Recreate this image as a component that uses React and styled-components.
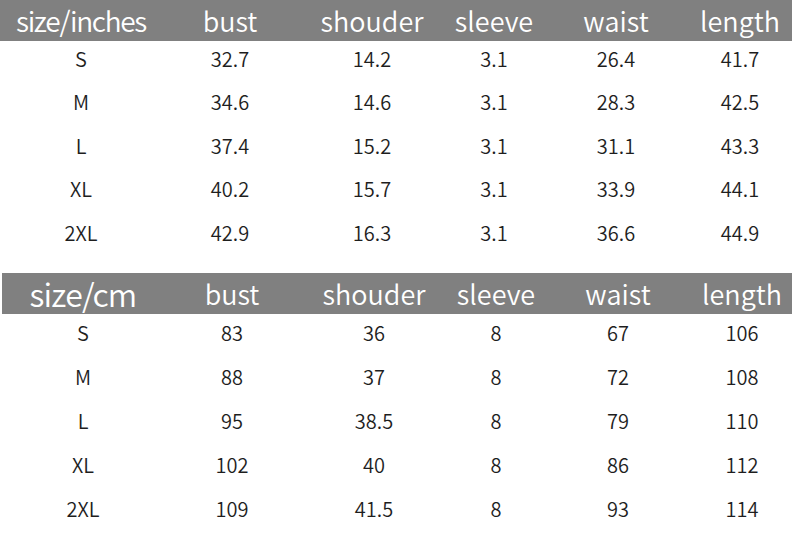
import React from "react";
import styled, { createGlobalStyle } from "styled-components";

const GlobalStyle = createGlobalStyle`
  html, body {
    margin: 0;
    padding: 0;
    background: #ffffff;
  }
  body {
    font-family: "Noto Sans CJK SC", "Noto Sans", sans-serif;
    width: 792px;
    height: 546px;
    overflow: hidden;
  }
`;

const COLS = "162px 136px 148px 96px 148px 100px";

const Page = styled.div`
  display: flex;
  flex-direction: column;
  gap: ${(p) => p.gap}px;
`;

const Table = styled.div`
  display: flex;
  flex-direction: column;
  margin-left: ${(p) => p.indent || 0}px;
`;

const HeadRow = styled.div`
  display: grid;
  grid-template-columns: ${COLS};
  height: 41px;
  background: #808080;
  color: #ffffff;
`;

const HeadCell = styled.div`
  display: flex;
  align-items: center;
  justify-content: center;
  font-size: ${(p) => p.size || 27}px;
  font-weight: 350;
  letter-spacing: ${(p) => p.spacing || 0}px;
  line-height: 41px;
  white-space: nowrap;
`;

const Row = styled.div`
  display: grid;
  grid-template-columns: ${COLS};
  height: ${(p) => p.h}px;
  color: #1e1e1e;
`;

const Cell = styled.div`
  display: flex;
  align-items: center;
  justify-content: center;
  font-size: 20px;
  font-weight: 350;
  padding-bottom: ${(p) => p.lift}px;
  white-space: nowrap;
`;

const columns = ["bust", "shouder", "sleeve", "waist", "length"];

const inches = [
  ["S", "32.7", "14.2", "3.1", "26.4", "41.7"],
  ["M", "34.6", "14.6", "3.1", "28.3", "42.5"],
  ["L", "37.4", "15.2", "3.1", "31.1", "43.3"],
  ["XL", "40.2", "15.7", "3.1", "33.9", "44.1"],
  ["2XL", "42.9", "16.3", "3.1", "36.6", "44.9"],
];

const cm = [
  ["S", "83", "36", "8", "67", "106"],
  ["M", "88", "37", "8", "72", "108"],
  ["L", "95", "38.5", "8", "79", "110"],
  ["XL", "102", "40", "8", "86", "112"],
  ["2XL", "109", "41.5", "8", "93", "114"],
];

function SizeTable({ label, labelSize, labelSpacing, rows, rowHeight, lift, indent }) {
  return (
    <Table indent={indent}>
      <HeadRow>
        <HeadCell size={labelSize} spacing={labelSpacing}>{label}</HeadCell>
        {columns.map((c) => (
          <HeadCell key={c}>{c}</HeadCell>
        ))}
      </HeadRow>
      {rows.map((r) => (
        <Row key={r[0]} h={rowHeight}>
          {r.map((v, i) => (
            <Cell key={i} lift={lift}>{v}</Cell>
          ))}
        </Row>
      ))}
    </Table>
  );
}

export default function App() {
  return (
    <>
      <GlobalStyle />
      <Page gap={14}>
        <SizeTable label="size/inches" labelSize={28} labelSpacing={-1.3} rows={inches} rowHeight={43.5} lift={9} />
        <SizeTable label="size/cm" labelSize={32} labelSpacing={-0.8} rows={cm} rowHeight={44} lift={7} indent={2} />
      </Page>
    </>
  );
}
